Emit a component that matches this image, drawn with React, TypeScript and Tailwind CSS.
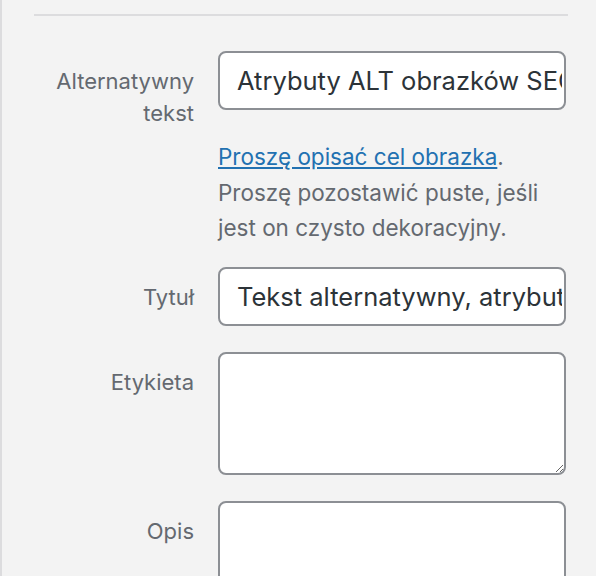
import React from "react";

const FONT = "font-['Inter','Liberation_Sans',sans-serif]";

function Row({
  label,
  children,
}: {
  label: React.ReactNode;
  children: React.ReactNode;
}) {
  return (
    <div className="flex items-start">
      <div className="w-[160px] shrink-0 pt-[14px] text-right text-[22px] leading-[32px] text-[#646970]">
        {label}
      </div>
      <div className="ml-[24px] w-[348px] shrink-0">{children}</div>
    </div>
  );
}

function TextInput({ value }: { value: string }) {
  return (
    <input
      type="text"
      readOnly
      value={value}
      className="block h-[59px] w-full rounded-[8px] border-2 border-[#8c8f94] bg-white pl-[17px] pr-[2px] text-[25.5px] text-[#2c3338] outline-none"
    />
  );
}

export default function App() {
  return (
    <div
      className={`${FONT} h-[576px] w-full overflow-hidden border-l-2 border-[#dcdcde] bg-[#f3f3f3] pl-[32px] pr-[28px] pt-[14px]`}
    >
      <div className="h-[2px] w-[534px] bg-[#dcdcde]" />

      <div className="mt-[35px] flex flex-col">
        {/* Alt text */}
        <Row
          label={
            <>
              Alternatywny
              <br />
              tekst
            </>
          }
        >
          <TextInput value="Atrybuty ALT obrazków SEO" />
          <p className="mt-[29px] text-[22.5px] leading-[35.5px] text-[#646970]">
            <a href="#" className="text-[#2271b1] underline">
              Proszę opisać cel obrazka
            </a>
            .<br />
            Proszę pozostawić puste, jeśli
            <br />
            jest on czysto dekoracyjny.
          </p>
        </Row>

        {/* Title */}
        <div className="mt-[21px]">
          <Row label="Tytuł">
            <TextInput value="Tekst alternatywny, atrybuty ALT" />
          </Row>
        </div>

        {/* Caption */}
        <div className="mt-[26px]">
          <Row label="Etykieta">
            <textarea className="block h-[123px] w-full rounded-[8px] border-2 border-[#8c8f94] bg-white px-[16px] py-[8px] text-[25px] text-[#2c3338] outline-none" />
          </Row>
        </div>

        {/* Description */}
        <div className="mt-[26px]">
          <Row label="Opis">
            <textarea className="block h-[123px] w-full rounded-[8px] border-2 border-[#8c8f94] bg-white px-[16px] py-[8px] text-[25px] text-[#2c3338] outline-none" />
          </Row>
        </div>
      </div>
    </div>
  );
}
